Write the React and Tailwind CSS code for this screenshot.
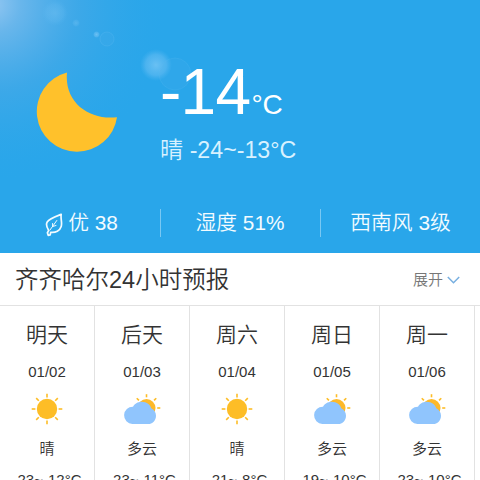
const days = [
  { name: '明天', date: '01/02', sky: '晴', range: '-23~-12°C' },
  { name: '后天', date: '01/03', sky: '多云', range: '-23~-11°C' },
  { name: '周六', date: '01/04', sky: '晴', range: '-21~-8°C' },
  { name: '周日', date: '01/05', sky: '多云', range: '-19~-10°C' },
  { name: '周一', date: '01/06', sky: '多云', range: '-23~-10°C' },
];

function Sun() {
  return (
    <svg className="size-8" viewBox="0 0 32 32" fill="none">
      <circle cx="16" cy="16" r="10.2" fill="#fdbd26" />
      {[0, 45, 90, 135, 180, 225, 270, 315].map((a) => (
        <path key={a} d="M16 .7V4.4" stroke="#fdbd26" strokeWidth="1.6" transform={`rotate(${a} 16 16)`} />
      ))}
    </svg>
  );
}

function CloudySun() {
  return (
    <svg className="h-8 w-[38px]" viewBox="0 0 38 32" fill="none">
      <circle cx="23.500" cy="15" r="9" fill="#fdb92a" />
      {[-45, 0, 45, 90].map((a) => (
        <path key={a} d="M23.500 1.2V4.3" stroke="#fdbd26" strokeWidth="1.6" transform={`rotate(${a} 23.5 15)`} />
      ))}
      <path d="M9.400 31A8.6 8.6 0 0 1 10 13.800C11.400 11 14.700 8.800 18.700 8.800C24 8.800 27.300 11.800 28.200 15.200C31 16.500 33 19.300 33 22.700C33 27.400 29.500 31 25 31Z" fill="#90c5fd" />
    </svg>
  );
}

function Glow() {
  return (
    <svg className="absolute left-0 top-0 size-full" viewBox="0 0 480 253" fill="none">
      <defs>
        <radialGradient id="corner" gradientUnits="userSpaceOnUse" cx="-8" cy="4" r="180">
          <stop offset="0" stopColor="#a6cdf3" stopOpacity=".85" />
          <stop offset=".16" stopColor="#84bdec" stopOpacity=".7" />
          <stop offset=".48" stopColor="#55abe6" stopOpacity=".45" />
          <stop offset="1" stopColor="#29a6ea" stopOpacity="0" />
        </radialGradient>
        <radialGradient id="flare">
          <stop offset="0" stopColor="#7fc9f6" stopOpacity=".75" />
          <stop offset=".65" stopColor="#6dc0f4" stopOpacity=".5" />
          <stop offset="1" stopColor="#5ab9f2" stopOpacity="0" />
        </radialGradient>
      </defs>
      <rect width="480" height="253" fill="url(#corner)" />
      <circle cx="55" cy="13" r="13" fill="url(#flare)" opacity=".45" />
      <circle cx="76" cy="23" r="4" fill="url(#flare)" opacity=".5" />
      <circle cx="96.500" cy="34.500" r="3.500" fill="url(#flare)" />
      <circle cx="107" cy="39" r="7" fill="#5ab9f2" fillOpacity=".12" stroke="#69bff4" strokeOpacity=".25" />
      <circle cx="156" cy="65" r="16" fill="url(#flare)" />
      <circle cx="175" cy="74" r="16" fill="#5ab9f2" fillOpacity=".12" stroke="#69bff4" strokeOpacity=".16" />
    </svg>
  );
}

export default function App() {
  return (
    <div className="h-[480px] w-[480px] overflow-hidden bg-white font-['Liberation_Sans','Noto_Sans_CJK_SC',sans-serif] text-[#333]">
      <header className="relative h-[253px] bg-[#29a6ea] text-white">
        <Glow />
        <div className="relative flex h-[205px] pt-[60px]">
          <svg className="ml-[35px] mt-3 h-[82px] w-[82px]" viewBox="0 0 82 82">
            <path d="M32 .5A40.300 40.300 0 1 0 82 45.200C55 48.500 29 31 32 .5Z" fill="#ffc12b" />
          </svg>
          <div className="ml-[43px]">
            <div className="flex h-[66px] items-baseline leading-[64px]">
              <span className="text-[64px] tracking-[-0.7px]">-14</span>
              <span className="ml-px text-[28px]">°C</span>
            </div>
            <div className="mt-2 text-[23.200px] font-[350] leading-8 text-[#d8f1ff]">晴 -24~-13°C</div>
          </div>
        </div>
        <div className="relative grid h-9 grid-cols-3 text-[20.800px] font-[350] leading-9 text-[#f2fbff]">
          <div className="flex items-center justify-center gap-[5px] pl-[3px]">
            <svg className="mt-[3px] h-6 w-[18px]" viewBox="0 0 18 24" fill="none" stroke="currentColor" strokeWidth="1.7" strokeLinecap="round" strokeLinejoin="round">
              <path d="M16.200 1.300C10.900 3.400 4.500 5.500 2.200 9C.6 11.700 1.500 14 3.700 17.500L2.400 19.700L3.200 22.300L5.200 21.900L5.700 19.300C10.500 20 15 17.600 16.200 13.500C17.400 9.500 15.400 6 16.200 1.300Z" />
              <path d="M5 17L11.800 7.500M7.600 13.500V10.500M7.600 13.500L11 12.500" strokeWidth="1" />
            </svg>
            <span>优 38</span>
          </div>
          <div className="flex items-center justify-between">
            <span className="h-7 w-px bg-[#79c8f3]" />
            <span>湿度 51%</span>
            <span className="h-7 w-px" />
          </div>
          <div className="flex items-center">
            <span className="h-7 w-px bg-[#79c8f3]" />
            <span className="flex-1 text-center">西南风 3级</span>
          </div>
        </div>
      </header>
      <section className="flex h-[52px] items-center justify-between pl-[15px] pr-[20px]">
        <h1 className="pt-0.5 text-[23.500px] font-[350] leading-[50px]">齐齐哈尔24小时预报</h1>
        <div className="flex items-center gap-1 pt-0.5 text-[15px] font-[350] text-[#777]">
          <span>展开</span>
          <svg className="h-2 w-[13px]" viewBox="0 0 13 8" fill="none" stroke="#77afe0" strokeWidth="1.5">
            <path d="M.8 1L6.500 6.700L12.200 1" />
          </svg>
        </div>
      </section>
      <section className="flex h-[190px] border-t border-[#e2e2e2]">
        {days.map((d) => (
          <article key={d.date} className="flex w-[95px] shrink-0 flex-col items-center border-r border-[#e2e2e2]">
            <h2 className="mt-[13px] text-[21px] font-[350] leading-8">{d.name}</h2>
            <p className="mt-[11px] text-[15px] leading-5">{d.date}</p>
            <div className="mt-[11px] flex h-8 justify-center">{d.sky === '晴' ? <Sun /> : <CloudySun />}</div>
            <p className="mt-[14px] text-[15px] font-[350] leading-5">{d.sky}</p>
            <p className="mt-[11px] whitespace-nowrap text-[15px] leading-5">{d.range}</p>
          </article>
        ))}
      </section>
    </div>
  );
}
